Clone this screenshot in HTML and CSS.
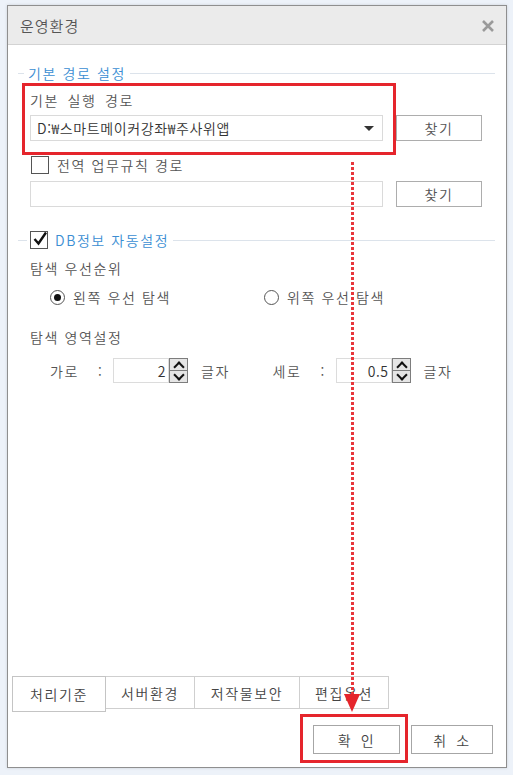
FILE: index.html
```html
<!DOCTYPE html>
<html lang="ko">
  <head>
    <meta charset="utf-8" />
    <title>운영환경</title>
    <meta name="viewport" content="width=device-width, initial-scale=1" />
    <link rel="stylesheet" href="styles.css">
  </head>
  <body>
    <div class="dialog">
      <div class="titlebar">
        <span>운영환경</span>
        <svg class="close" width="14" height="14" viewBox="0 0 14 14">
          <path d="M2 2 L12 12 M12 2 L2 12" stroke="#9a9a9a" stroke-width="2.6" />
        </svg>
      </div>

      <div class="content">
        <div class="group-head">기본 경로 설정</div>
        <div class="block">
          <div class="label first">기본 실행 경로</div>
          <div class="field">
            <div class="combo">
              <span class="path">D:₩스마트메이커강좌₩주사위앱</span>
              <span class="caret"></span>
            </div>
            <button class="btn">찾기</button>
          </div>

          <label class="check-row">
            <span class="box"></span>
            전역 업무규칙 경로
          </label>
          <div class="field tight">
            <div class="input"></div>
            <button class="btn">찾기</button>
          </div>
        </div>

        <div class="group-head db">
          <span class="box checked">
            <svg width="18" height="18" viewBox="0 0 18 18">
              <path d="M3.5 9 L7.5 13.5 L15 2.5" fill="none" stroke="#111" stroke-width="2.4" />
            </svg>
          </span>
          DB정보 자동설정
        </div>
        <div class="block">
          <div class="label">탐색 우선순위</div>
          <div class="radios">
            <label class="radio-opt"><span class="radio on"></span>왼쪽 우선 탐색</label>
            <label class="radio-opt"><span class="radio"></span>위쪽 우선 탐색</label>
          </div>

          <div class="label area">탐색 영역설정</div>
          <div class="dims">
            <div class="dim">
              <span class="dim-name">가로</span>
              <span class="colon">:</span>
              <div class="spin">
                <span class="spin-val">2</span>
                <span class="spin-btns">
                  <span class="arrow up"></span>
                  <span class="arrow down"></span>
                </span>
              </div>
              <span class="unit">글자</span>
            </div>
            <div class="dim">
              <span class="dim-name">세로</span>
              <span class="colon">:</span>
              <div class="spin">
                <span class="spin-val">0.5</span>
                <span class="spin-btns">
                  <span class="arrow up"></span>
                  <span class="arrow down"></span>
                </span>
              </div>
              <span class="unit">글자</span>
            </div>
          </div>
        </div>
      </div>

      <div class="tabs">
        <div class="tab active" style="width: 94px">처리기준</div>
        <div class="tab" style="width: 90px">서버환경</div>
        <div class="tab" style="width: 106px">저작물보안</div>
        <div class="tab" style="width: 90px">편집옵션</div>
      </div>

      <div class="actions">
        <button class="btn ok">확 인</button>
        <button class="btn cancel">취 소</button>
      </div>

      <!-- annotations drawn over the dialog -->
      <div class="mark mark-path"></div>
      <div class="mark mark-ok"></div>
      <div class="dots"></div>
      <div class="arrowhead"></div>
    </div>
  </body>
</html>
```

FILE: styles.css
```css
* {
  box-sizing: border-box;
}
html,
body {
  margin: 0;
  height: 100%;
}
body {
  background: #edf2f9;
  padding: 5px 6px 7px 7px;
  font-family: "Noto Sans CJK KR", sans-serif;
  font-size: 14px;
  font-weight: 350;
  letter-spacing: 1.6px;
  line-height: 20px;
  color: #555;
}
.dialog {
  position: relative;
  height: 100%;
  background: #fff;
  border: 1px solid #8f8f8f;
  display: flex;
  flex-direction: column;
  box-shadow: 0 0 3px #00000022;
}
.titlebar {
  height: 39px;
  flex-shrink: 0;
  background: #ebebeb;
  border-bottom: 1px solid #d3d3d3;
  display: flex;
  align-items: center;
  justify-content: space-between;
  padding: 1px 11px 0 12px;
  font-size: 15px;
  letter-spacing: 1px;
  color: #555;
}
.content {
  flex: 1;
  padding: 18px 11px 0 10px;
}
.group-head {
  display: flex;
  align-items: center;
  height: 20px;
  color: #3b8ed3;
}
.group-head::before {
  content: "";
  width: 6px;
  border-top: 1px solid #dce3eb;
  margin-right: 4px;
}
.group-head::after {
  content: "";
  flex: 1;
  border-top: 1px solid #dce3eb;
  margin-left: 4px;
}
.group-head.db {
  margin-top: 23px;
}
.group-head.db::before {
  width: 9px;
  margin-right: 3px;
}
.block {
  padding-left: 12px;
}
.label {
  height: 20px;
  margin-top: 8px;
}
.label.first {
  margin-top: 7px;
  word-spacing: 3px;
}
.label.area {
  margin-top: 20px;
}
.field {
  display: flex;
  gap: 13px;
  margin-top: 5px;
}
.field.tight {
  margin-top: 6px;
}
.combo,
.input {
  width: 353px;
  height: 26px;
  border: 1px solid #dadada;
  background: #fff;
}
.combo {
  display: flex;
  align-items: center;
  justify-content: space-between;
  padding: 0 8px 0 6px;
  color: #333;
}
.path {
  letter-spacing: 0.6px;
}
.caret {
  width: 0;
  height: 0;
  border-left: 5px solid transparent;
  border-right: 5px solid transparent;
  border-top: 5px solid #333;
}
.btn {
  width: 86px;
  height: 26px;
  border: 1px solid #adadad;
  background: #fff;
  font: inherit;
  letter-spacing: 1.6px;
  color: #555;
  padding: 0;
}
.check-row {
  display: flex;
  align-items: center;
  gap: 8px;
  height: 20px;
  margin-top: 14px;
  padding-left: 1px;
}
.box {
  width: 18px;
  height: 18px;
  border: 1px solid #555;
  background: #fff;
  flex-shrink: 0;
}
.box.checked {
  position: relative;
  margin-right: 7px;
}
.box.checked svg {
  position: absolute;
  left: 0;
  top: -2px;
}
.radios {
  display: flex;
  margin-top: 9px;
  padding-left: 20px;
}
.radio-opt {
  display: flex;
  align-items: center;
  gap: 8px;
  height: 20px;
  width: 214px;
}
.radio {
  width: 15px;
  height: 15px;
  border: 1px solid #555;
  border-radius: 50%;
  display: flex;
  align-items: center;
  justify-content: center;
}
.radio.on::after {
  content: "";
  width: 7px;
  height: 7px;
  border-radius: 50%;
  background: #111;
}
.dims {
  display: flex;
  margin-top: 11px;
  padding-left: 20px;
}
.dim {
  display: flex;
  align-items: center;
  width: 226px;
}
.dim-name {
  width: 48px;
}
.colon {
  width: 15px;
}
.spin {
  display: flex;
  height: 25px;
}
.spin-val {
  width: 56px;
  border: 1px solid #dcdcdc;
  text-align: right;
  padding: 2px 2px 0 0;
  letter-spacing: 0.5px;
  color: #333;
}
.spin-btns {
  display: flex;
  flex-direction: column;
  width: 19px;
}
.arrow {
  flex: 1;
  border: 1px solid #7d7d7d;
  background: #e5e5e5;
  position: relative;
}
.arrow.down {
  margin-top: -1px;
}
.arrow::after {
  content: "";
  position: absolute;
  left: 5px;
  width: 6px;
  height: 6px;
  border-left: 2.5px solid #111;
  border-top: 2.5px solid #111;
}
.arrow.up::after {
  top: 4px;
  transform: rotate(45deg);
}
.arrow.down::after {
  top: 0px;
  transform: rotate(225deg);
}
.unit {
  margin-left: 13px;
}
.tabs {
  display: flex;
  align-items: flex-start;
  height: 36px;
  padding-left: 4px;
  flex-shrink: 0;
}
.tab {
  height: 33px;
  border: 1px solid #cfcfcf;
  margin-left: -1px;
  display: flex;
  align-items: center;
  justify-content: center;
  color: #444;
}
.tab.active {
  height: 36px;
  margin-left: 0;
  border-color: #c4c4c4;
  position: relative;
}
.actions {
  display: flex;
  justify-content: flex-end;
  gap: 11px;
  padding: 13px 13px 13px 0;
  flex-shrink: 0;
}
.actions .btn {
  height: 29px;
  border-color: #a6a6a6;
  color: #444;
  word-spacing: 3px;
}
.btn.ok {
  width: 87px;
}
.btn.cancel {
  width: 82px;
}
.mark {
  position: absolute;
  border: 3px solid #e5252c;
}
.mark-path {
  left: 14px;
  top: 77px;
  width: 374px;
  height: 72px;
}
.mark-ok {
  left: 292px;
  top: 708px;
  width: 108px;
  height: 49px;
}
.dots {
  position: absolute;
  left: 343px;
  top: 156px;
  width: 3px;
  height: 534px;
  background: repeating-linear-gradient(#e8373c 0 3px, transparent 3px 5px);
}
.arrowhead {
  position: absolute;
  left: 336px;
  top: 688px;
  width: 0;
  height: 0;
  border-left: 8px solid transparent;
  border-right: 8px solid transparent;
  border-top: 18px solid #e5252c;
}
```
